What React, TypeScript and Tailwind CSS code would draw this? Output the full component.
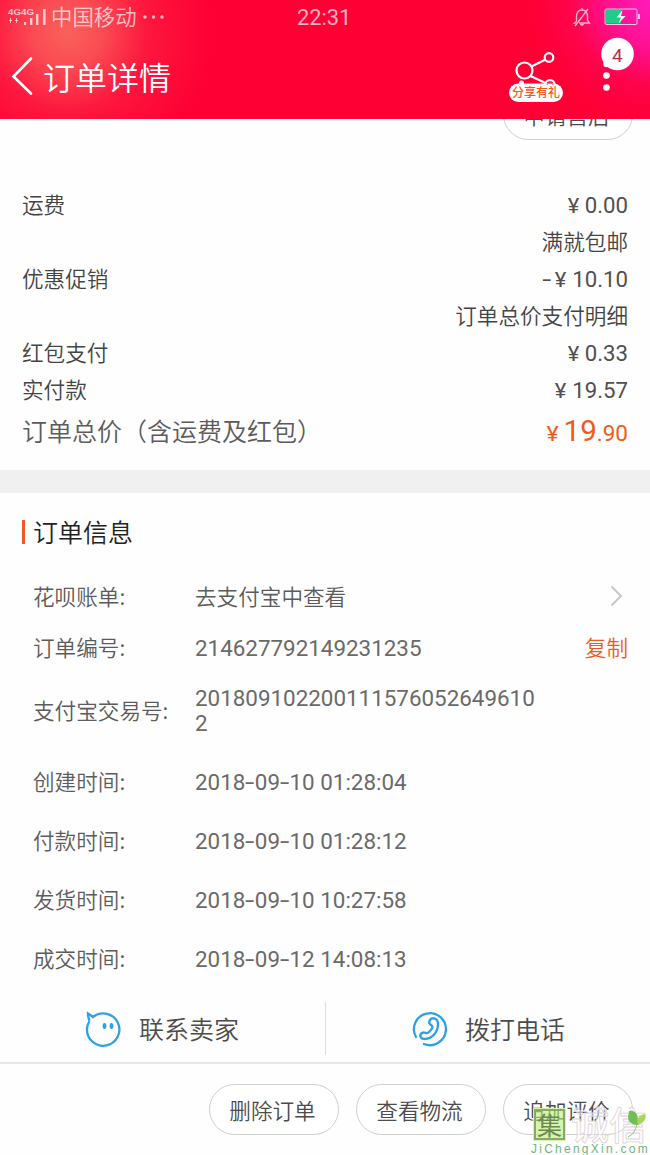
import type { ReactNode } from 'react';

const CJK = "font-['Noto_Sans_CJK_SC',sans-serif]";

function Num({ children, className = '' }: { children: ReactNode; className?: string }) {
  return <span className={"font-['Roboto',sans-serif] font-normal " + className}>{children}</span>;
}

function Yuan({ className = 'text-[20px]' }: { className?: string }) {
  return <span className={"mr-[5px] inline-block w-[13px] scale-x-110 text-center font-['Roboto',sans-serif] font-normal " + className}>¥</span>;
}

function Dash() {
  return <span className="inline-block w-[9.5px] scale-x-150 text-center">-</span>;
}

function DateTime({ date, time }: { date: string; time: string }) {
  const [year, month, day] = date.split('-');
  return (
    <Num className="pt-[3px]">
      {year}<Dash />{month}<Dash />{day} {time}
    </Num>
  );
}

function PriceRow({ label, children }: { label?: string; children: ReactNode }) {
  return (
    <div className="flex h-[37px] items-center justify-between whitespace-nowrap text-[21.6px] font-[350] leading-none text-[#444]">
      <span>{label}</span>
      <span>{children}</span>
    </div>
  );
}

function Amount({ negative = false, children }: { negative?: boolean; children: ReactNode }) {
  return (
    <span className="inline-block pt-[3px] text-[#505050]">
      {negative && <Num className="mr-[3px]"><Dash /></Num>}
      <Yuan />
      <Num className="text-[22.2px]">{children}</Num>
    </span>
  );
}

function InfoRow({ label, height, children }: { label: string; height: string; children: ReactNode }) {
  return (
    <div className={'flex items-center whitespace-nowrap leading-none ' + height}>
      <span className="w-[162px] shrink-0 text-[21.6px] font-[350] text-[#5c5c5c]">{label}</span>
      <div className="flex flex-1 items-center justify-between text-[22.4px] text-[#6a6a6a]">{children}</div>
    </div>
  );
}

function ActionButton({ children }: { children: ReactNode }) {
  return (
    <button className="flex h-[51px] w-[130px] items-center justify-center rounded-full border border-[#cfcfcf] bg-white pr-[3px] text-[21.6px] font-[350] leading-none text-[#4c4c4c]">
      {children}
    </button>
  );
}

function Header() {
  return (
    <header className="relative z-10 h-[119px] shrink-0 bg-[radial-gradient(circle_at_68px_32px,#f9625b_0px,rgba(250,88,88,0.85)_35px,rgba(252,50,72,0.45)_80px,rgba(254,0,52,0)_145px),radial-gradient(circle_at_655px_0px,#ff1cc0_0px,rgba(255,20,165,0.85)_45px,rgba(255,10,110,0.4)_85px,rgba(254,0,52,0)_125px)] bg-[#fe0034] text-white">
      <div className="flex h-[33px] items-center text-white/70">
        <svg className="ml-[8px] shrink-0" width="40" height="20" viewBox="0 0 40 20" fill="currentColor">
          <text x="0" y="8" fontSize="9" fontFamily="Liberation Sans" fontWeight="bold" textLength="26" lengthAdjust="spacingAndGlyphs">4G4G</text>
          <path d="M2.5 11v5M1 13.500h3M8.500 11v5M7 13.500h3" stroke="currentColor" strokeWidth="0.9" />
          <rect x="16" y="15" width="2.2" height="3" />
          <rect x="22" y="11" width="2.4" height="7" />
          <rect x="28" y="7" width="2.4" height="11" />
          <rect x="35" y="2" width="2.6" height="16" />
        </svg>
        <span className="-mt-[2px] ml-[3px] w-[86px] whitespace-nowrap text-[21.4px] font-[350] leading-none">中国移动</span>
        <svg className="ml-[5px]" width="24" height="6" viewBox="0 0 24 6" fill="currentColor">
          <circle cx="3" cy="3" r="1.7" /><circle cx="11.5" cy="3" r="1.7" /><circle cx="20" cy="3" r="1.7" />
        </svg>
        <Num className="ml-[131px] mt-[3px] text-[21.8px] leading-none">22:31</Num>
        <svg className="ml-auto mr-[13px]" width="18" height="20" viewBox="0 0 18 20" fill="none" stroke="currentColor" strokeWidth="1.3">
          <path d="M3.5 14.5V9Q4 3 9 3T14.5 9v4.5l2 2.500H6M3.500 14.500L1.500 16H3M9 3V1M7.500 17q1.500 2 3 0M15 2L2 19" />
        </svg>
        <svg className="mr-[10px]" width="36" height="18" viewBox="0 0 36 18">
          <rect x="1" y="1" width="32" height="15.500" rx="1.500" fill="none" stroke="#fff" strokeOpacity=".75" />
          <rect x="2" y="2" width="15" height="13.500" fill="#20cc87" />
          <rect x="34" y="6" width="2" height="5" fill="#ffc5eb" />
          <path d="M18.500 2L12.500 9.500h4.500L14.500 15.500l7-7.500h-4.500z" fill="#fff" />
        </svg>
      </div>
      <div className="flex h-[86px] items-start">
        <svg className="ml-[11px] mt-[23px]" width="24" height="40" viewBox="0 0 24 40" fill="none" stroke="#fff" strokeWidth="2.600" strokeLinecap="round">
          <path d="M20 2.500L2.500 20.500L20 37.500" />
        </svg>
        <h1 className="ml-[8px] mt-[27px] whitespace-nowrap text-[32px] font-[350] leading-[32px]">订单详情</h1>
        <div className="relative ml-auto mr-[32px] mt-[16px] h-[54px] w-[56px]">
          <svg className="absolute left-0 top-0" width="56" height="54" viewBox="0 0 56 54" fill="none" stroke="#fff" strokeWidth="2.200">
            <circle cx="16.500" cy="21.500" r="8" />
            <circle cx="41" cy="8.500" r="4.300" />
            <circle cx="42" cy="36" r="4.800" />
            <path d="M23.500 17.500L37.500 10.500M22.500 27L38.500 34.500" />
            <rect x="1" y="34.500" width="54" height="18.500" rx="9.250" fill="#fff" stroke="none" />
            <circle cx="13.500" cy="34" r="2.500" fill="#fff" stroke="none" />
            <path d="M38.800 36a3.500 3.500 0 0 1 6.400 0" stroke="#f7637b" strokeWidth="1" />
          </svg>
          <span className="absolute left-[4px] top-[37px] whitespace-nowrap text-[12px] font-medium leading-[12px] text-[#ed5b25]">分享有礼</span>
        </div>
        <div className="relative mr-[16px] mt-[4px] h-[60px] w-[38px]">
          <svg className="absolute left-0 top-0" width="38" height="60" viewBox="0 0 38 60" fill="#fff">
            <circle cx="21.500" cy="17" r="16.300" />
            <circle cx="10.500" cy="27" r="3.200" />
            <circle cx="10.500" cy="38.500" r="3.300" />
            <circle cx="10.500" cy="50.500" r="3.300" />
          </svg>
          <span className="absolute left-[16px] top-[9px] font-['Roboto',sans-serif] text-[19px] leading-[20px] text-[#c42a48]">4</span>
        </div>
      </div>
    </header>
  );
}

function Watermark() {
  return (
    <div className="pointer-events-none absolute left-[530px] top-[1105px] h-[50px] w-[120px]">
      <div className="absolute left-[4px] top-[4px] flex h-[31px] w-[31px] items-center justify-center border-2 border-[#8ca56c] bg-[#b9ee75]/60 text-[25px] leading-none text-[#6d8752] outline outline-1 outline-[#d5f6a8]">集</div>
      <span className="absolute left-[41px] top-0 whitespace-nowrap text-[38px] font-medium leading-[36px] text-white/50 [-webkit-text-stroke:0.8px_#ddd3d9]">诚信</span>
      <svg className="absolute left-[97px] top-[2px]" width="22" height="32" viewBox="0 0 22 32">
        <path d="M2 4Q12 2 11 18Q2 18 1 11Z" fill="#6fbe58" />
        <path d="M11 18Q8 9 18 7Q21 14 11 18Z" fill="#a9d65a" />
        <path d="M10 17Q8 27 1 30" fill="none" stroke="#8fc470" />
      </svg>
      <span className="absolute left-[1px] top-[38px] whitespace-nowrap font-['Liberation_Sans',sans-serif] text-[12px] leading-[12px] tracking-[2.25px] text-[#74b37d]">
        JiChengXin.com
      </span>
    </div>
  );
}

export default function App() {
  return (
    <div className={'relative flex h-[1155px] w-[650px] flex-col overflow-hidden bg-[#fefefe] ' + CJK}>
      <Header />
      <main className="-mt-[30px]">
        <section className="h-[381px] px-[22px]">
          <div className="-mr-[5px] flex justify-end">
            <ActionButton>申请售后</ActionButton>
          </div>
          <div className="mt-[45px]">
            <PriceRow label="运费"><Amount>0.00</Amount></PriceRow>
            <PriceRow>满就包邮</PriceRow>
            <PriceRow label="优惠促销"><Amount negative>10.10</Amount></PriceRow>
            <PriceRow>订单总价支付明细</PriceRow>
            <PriceRow label="红包支付"><Amount>0.33</Amount></PriceRow>
            <PriceRow label="实付款"><Amount>19.57</Amount></PriceRow>
          </div>
          <div className="flex h-[46px] items-center justify-between whitespace-nowrap text-[25px] leading-none">
            <span className="font-[350] text-[#5c5c5c]">订单总价（含运费及红包）</span>
            <span className="pt-[4px] text-[#ef5b1c]"><Yuan className="text-[21px]" /><Num className="text-[29.5px]">19</Num><Num className="text-[22.500px]">.90</Num></span>
          </div>
        </section>
        <div className="h-[23px] bg-[#f0f0f0]" />
        <section className="h-[495px] pl-[22px] pr-[22px] pt-[20px]">
          <h2 className="flex h-[38px] items-center text-[25px] font-[350] leading-none text-[#222]">
            <span className="mr-[8px] h-[24px] w-[3px] bg-[#ee5a22]" />
            <span className="-mt-[2px]">订单信息</span>
          </h2>
          <div className="pl-[11px] pt-[19px]">
            <InfoRow label="花呗账单:" height="h-[51px]">
              <span className="text-[21.600px] font-[350] text-[#5c5c5c]">去支付宝中查看</span>
              <svg className="mr-[5px]" width="13" height="22" viewBox="0 0 13 22" fill="none" stroke="#c8c8c8" strokeWidth="2">
                <path d="M1.500 1.500L11 11L1.500 20.500" />
              </svg>
            </InfoRow>
            <InfoRow label="订单编号:" height="h-[51px]">
              <Num className="pt-[3px]">214627792149231235</Num>
              <span className="text-[21.600px] font-[350] text-[#ed5a20]">复制</span>
            </InfoRow>
            <InfoRow label="支付宝交易号:" height="h-[75px]">
              <Num className="w-[344px] whitespace-normal break-all pt-[3px] leading-[25px]">2018091022001115760526496102</Num>
            </InfoRow>
            <InfoRow label="创建时间:" height="h-[67px]"><DateTime date="2018-09-10" time="01:28:04" /></InfoRow>
            <InfoRow label="付款时间:" height="h-[51px]"><DateTime date="2018-09-10" time="01:28:12" /></InfoRow>
            <InfoRow label="发货时间:" height="h-[67px]"><DateTime date="2018-09-10" time="10:27:58" /></InfoRow>
            <InfoRow label="成交时间:" height="h-[51px]"><DateTime date="2018-09-12" time="14:08:13" /></InfoRow>
          </div>
        </section>
        <section className="flex h-[76px] border-b-2 border-[#e7e7e7] pt-[14px] text-[25px] font-[350] leading-none text-[#4c4c4c]">
          <div className="flex h-[53px] w-[326px] items-center border-r border-[#dedede] pl-[85px]">
            <svg className="mr-[18px]" width="36" height="36" viewBox="0 0 36 36" fill="none" stroke="#2ba2e4" strokeWidth="2.300">
              <path d="M4.500 10Q2 14 2 18A16.200 16.200 0 1 0 8 6L3 2.500Q3 6 4.500 10" />
              <ellipse cx="19.500" cy="15" rx="1.900" ry="3" fill="#2ba2e4" stroke="none" />
              <ellipse cx="26.500" cy="15" rx="1.900" ry="3" fill="#2ba2e4" stroke="none" />
            </svg>
            联系卖家
          </div>
          <div className="flex h-[53px] flex-1 items-center pl-[86px]">
            <svg className="mr-[17px]" width="36" height="36" viewBox="0 0 36 36" fill="none" stroke="#2ba2e4" strokeWidth="2.300" strokeLinecap="round">
              <path d="M4 26A16 16 0 1 1 12 33" />
              <path d="M18 9C20 6 26 7 26 13C26 21 20 28 13 28C8 28 7 24 10 22C13 20 14 24 17 21C20 18 22 16 19 14Q16 12 18 9Z" />
            </svg>
            拨打电话
          </div>
        </section>
        <footer className="flex gap-[17px] pl-[209px] pt-[20px]">
          <ActionButton>删除订单</ActionButton>
          <ActionButton>查看物流</ActionButton>
          <ActionButton>追加评价</ActionButton>
        </footer>
      </main>
      <Watermark />
    </div>
  );
}
